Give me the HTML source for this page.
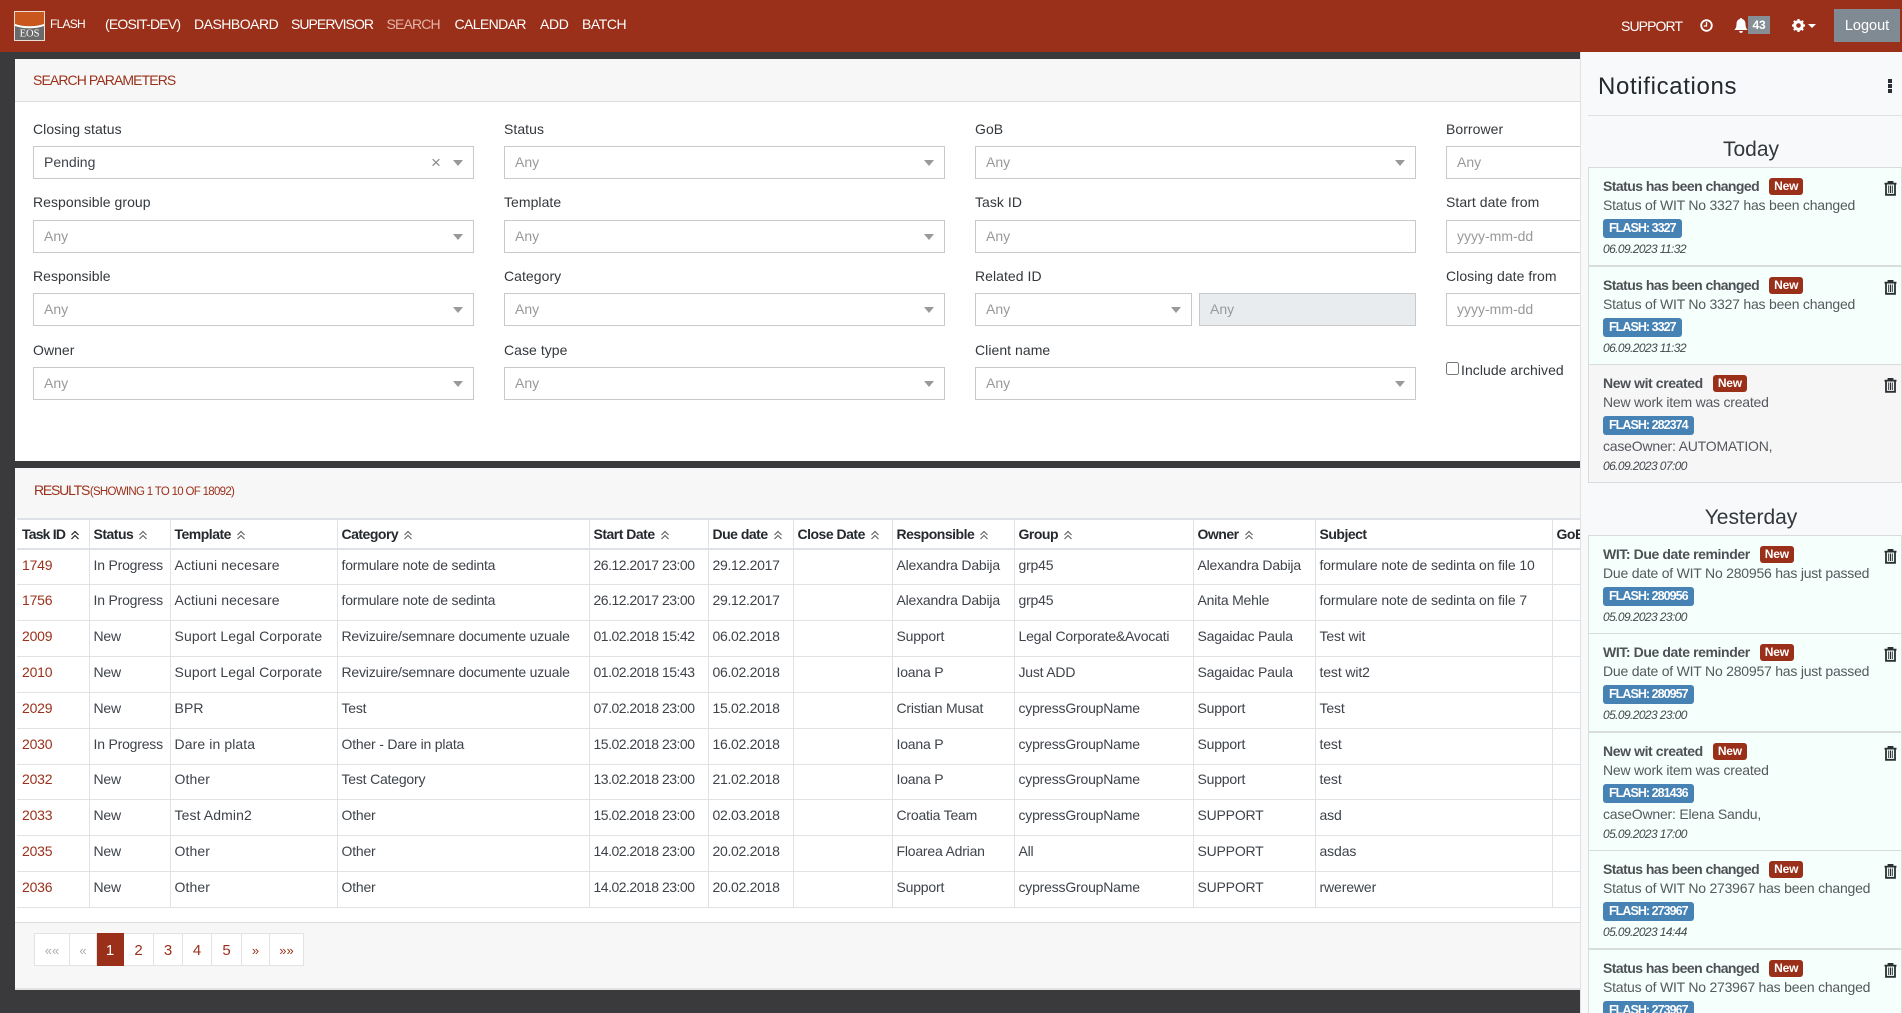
<!DOCTYPE html>
<html lang="en"><head><meta charset="utf-8"><title>FLASH - Search</title>
<style>
*{box-sizing:border-box}
html,body{margin:0;padding:0;width:1902px;height:1013px;overflow:hidden;background:#3a3a3c;font-family:"Liberation Sans",sans-serif;font-size:14px;color:#3a3f45}
#root{position:relative;width:1902px;height:1013px;overflow:hidden;background:#3a3a3c}
.a,.t{position:absolute}
.t{white-space:nowrap;line-height:20px;height:20px}
nav{position:absolute;left:0;top:0;width:1902px;height:52px;background:#9b301a}
nav .t{color:#fff;font-size:14px;letter-spacing:-.35px}
.panel{position:absolute;left:15px;width:1570px;background:#fff}
.hd{position:absolute;left:0;width:100%;background:#f7f7f7}
.lb{font-size:14px;color:#33383d;letter-spacing:.05px}
.sel{position:absolute;height:33px;border:1px solid #c9c9c9;background:#fff;color:#999;line-height:31px;padding-left:10px;font-size:14px}
.sel.ar:after{content:"";position:absolute;right:10px;top:13px;border-left:5px solid transparent;border-right:5px solid transparent;border-top:6px solid #999}
table{position:absolute;left:17px;top:518px;border-collapse:collapse;table-layout:fixed;width:1600px;background:#fff}
th,td{padding:0 0 0 4px;text-align:left;font-size:14px;white-space:nowrap;overflow:hidden;border-right:1px solid #dfe3e6;letter-spacing:-.2px}
th{height:30px;border-top:2px solid #dee2e6;border-bottom:2px solid #dee2e6;color:#25292d;font-weight:bold;letter-spacing:-.5px}
td{height:35.85px;padding-bottom:5px;border-bottom:1px solid #dfe3e6;color:#3e434a}
td:first-child,th:first-child{padding-left:5px}
td:first-child{color:#9b301a}
th:first-child{letter-spacing:-.8px}
td:nth-child(3){letter-spacing:.1px}
td:nth-child(5){letter-spacing:-.5px}
td:nth-child(6){letter-spacing:-.3px}
td:nth-child(11){letter-spacing:-.12px}
th svg{width:10px;height:10px;margin-left:5px;vertical-align:-1px}
.pg{position:absolute;top:933px;height:33px;border:1px solid #e3e3e3;border-left:0;background:#fff;color:#9b301a;text-align:center;line-height:33px;font-size:15px}
#nt{position:absolute;left:1580px;top:52px;width:322px;height:961px;background:#f8f9fb;border-left:1px solid #dfe2e6}
.c{position:absolute;left:1588px;width:314px;border:1px solid #d8dddc;background:#f5fffb}
.c.r{background:#f6f6f7}
.ti{position:absolute;left:14px;top:8px;line-height:20px;font-weight:bold;font-size:14px;color:#4d5156;letter-spacing:-.55px;white-space:nowrap}
.ti b{display:inline-block;margin-left:10px;background:#9b301a;color:#fff;font-size:12px;line-height:17px;height:17px;padding:0 5px;border-radius:3px;vertical-align:1px;letter-spacing:-.2px}
.w{letter-spacing:-.4px}
.de{position:absolute;left:14px;top:27px;line-height:20px;font-size:14px;color:#55595e;letter-spacing:-.22px;white-space:nowrap}
.fl{position:absolute;left:14px;top:51px;height:19px;line-height:19px;padding:0 6px;background:#4682b4;color:#fff;font-weight:bold;font-size:12.5px;border-radius:3px;letter-spacing:-.95px;white-space:nowrap}
.da{position:absolute;left:14px;top:71px;line-height:20px;font-size:12px;font-style:italic;color:#44484d;letter-spacing:-.6px;white-space:nowrap}
.co{position:absolute;left:14px;top:71px;line-height:20px;font-size:14px;color:#55595e;letter-spacing:-.2px;white-space:nowrap}
.tr{position:absolute;left:295px;top:13px;width:13px;height:15px}
</style></head><body>
<div id="root">
<svg width="0" height="0" style="position:absolute"><defs>
<symbol id="up" viewBox="0 0 10 10"><path d="M1.500 5 5 1.500 8.500 5M1.500 9 5 5.500 8.500 9" fill="none" stroke="currentColor" stroke-width="1.200"/></symbol>
<symbol id="bin" viewBox="0 0 13 15"><path d="M4.500 2V.8h4V2M.5 2.600h12M2 3v10.800h9V3" fill="none" stroke="#2b2f33" stroke-width="1.800"/><path d="M4.700 4.500v7.500M6.500 4.500v7.500M8.300 4.500v7.500" stroke="#2b2f33" stroke-width="1"/></symbol>
</defs></svg>

<div class="panel" style="top:59px;height:402px">
  <div class="hd" style="top:0;height:43px;border-bottom:1px solid #dcdcdc"></div>
</div>
<div class="t" style="left:33px;top:70px;color:#9b301a;font-size:14px;letter-spacing:-.9px">SEARCH PARAMETERS</div>

<div class="t lb" style="left:33px;top:119px">Closing status</div>
<div class="t lb" style="left:504px;top:119px">Status</div>
<div class="t lb" style="left:975px;top:119px">GoB</div>
<div class="t lb" style="left:1446px;top:119px">Borrower</div>
<div class="sel ar" style="left:33px;top:146px;width:441px;color:#3e434a">Pending<span class="a" style="left:397px;top:0;color:#888;font-size:17px">×</span></div>
<div class="sel ar" style="left:504px;top:146px;width:441px">Any</div>
<div class="sel ar" style="left:975px;top:146px;width:441px">Any</div>
<div class="sel" style="left:1446px;top:146px;width:200px">Any</div>

<div class="t lb" style="left:33px;top:192px">Responsible group</div>
<div class="t lb" style="left:504px;top:192px">Template</div>
<div class="t lb" style="left:975px;top:192px">Task ID</div>
<div class="t lb" style="left:1446px;top:192px">Start date from</div>
<div class="sel ar" style="left:33px;top:220px;width:441px">Any</div>
<div class="sel ar" style="left:504px;top:220px;width:441px">Any</div>
<div class="sel" style="left:975px;top:220px;width:441px">Any</div>
<div class="sel" style="left:1446px;top:220px;width:200px">yyyy-mm-dd</div>

<div class="t lb" style="left:33px;top:266px">Responsible</div>
<div class="t lb" style="left:504px;top:266px">Category</div>
<div class="t lb" style="left:975px;top:266px">Related ID</div>
<div class="t lb" style="left:1446px;top:266px">Closing date from</div>
<div class="sel ar" style="left:33px;top:293px;width:441px">Any</div>
<div class="sel ar" style="left:504px;top:293px;width:441px">Any</div>
<div class="sel ar" style="left:975px;top:293px;width:217px">Any</div>
<div class="sel" style="left:1199px;top:293px;width:217px;background:#e9ecef">Any</div>
<div class="sel" style="left:1446px;top:293px;width:200px">yyyy-mm-dd</div>

<div class="t lb" style="left:33px;top:340px">Owner</div>
<div class="t lb" style="left:504px;top:340px">Case type</div>
<div class="t lb" style="left:975px;top:340px">Client name</div>
<div class="sel ar" style="left:33px;top:367px;width:441px">Any</div>
<div class="sel ar" style="left:504px;top:367px;width:441px">Any</div>
<div class="sel ar" style="left:975px;top:367px;width:441px">Any</div>
<div class="a" style="left:1446px;top:362px;width:13px;height:13px;border:1px solid #767676;border-radius:2.500px;background:#fff"></div>
<div class="t lb" style="left:1461px;top:360px">Include archived</div>

<div class="panel" style="top:468px;height:522px;background:#f7f7f7;border-bottom:2px solid #e2e2e2">
  <div class="a" style="left:0;top:50px;width:100%;height:405px;background:#fff;border-bottom:1px solid #dcdcdc"></div>
</div>
<div class="t" style="left:34px;top:480px;color:#9b301a;font-size:14px;letter-spacing:-1.2px">RESULTS <span style="font-size:11.5px;letter-spacing:-.7px;margin-left:-2px">(SHOWING 1 TO 10 OF 18092)</span></div>

<table>
<colgroup><col style="width:72px"><col style="width:81px"><col style="width:167px"><col style="width:252px"><col style="width:119px"><col style="width:85px"><col style="width:99px"><col style="width:122px"><col style="width:179px"><col style="width:122px"><col style="width:237px"><col style="width:66px"></colgroup>
<tr><th>Task ID<svg style="color:#222"><use href="#up"/></svg></th><th>Status<svg style="color:#666"><use href="#up"/></svg></th><th>Template<svg style="color:#666"><use href="#up"/></svg></th><th>Category<svg style="color:#666"><use href="#up"/></svg></th><th>Start Date<svg style="color:#666"><use href="#up"/></svg></th><th>Due date<svg style="color:#666"><use href="#up"/></svg></th><th>Close Date<svg style="color:#666"><use href="#up"/></svg></th><th>Responsible<svg style="color:#666"><use href="#up"/></svg></th><th>Group<svg style="color:#666"><use href="#up"/></svg></th><th>Owner<svg style="color:#666"><use href="#up"/></svg></th><th>Subject</th><th>GoB</th></tr>
<tr><td>1749</td><td>In Progress</td><td>Actiuni necesare</td><td>formulare note de sedinta</td><td>26.12.2017 23:00</td><td>29.12.2017</td><td></td><td>Alexandra Dabija</td><td>grp45</td><td>Alexandra Dabija</td><td>formulare note de sedinta on file 10</td><td></td></tr>
<tr><td>1756</td><td>In Progress</td><td>Actiuni necesare</td><td>formulare note de sedinta</td><td>26.12.2017 23:00</td><td>29.12.2017</td><td></td><td>Alexandra Dabija</td><td>grp45</td><td>Anita Mehle</td><td>formulare note de sedinta on file 7</td><td></td></tr>
<tr><td>2009</td><td>New</td><td>Suport Legal Corporate</td><td>Revizuire/semnare documente uzuale</td><td>01.02.2018 15:42</td><td>06.02.2018</td><td></td><td>Support</td><td>Legal Corporate&amp;Avocati</td><td>Sagaidac Paula</td><td>Test wit</td><td></td></tr>
<tr><td>2010</td><td>New</td><td>Suport Legal Corporate</td><td>Revizuire/semnare documente uzuale</td><td>01.02.2018 15:43</td><td>06.02.2018</td><td></td><td>Ioana P</td><td>Just ADD</td><td>Sagaidac Paula</td><td>test wit2</td><td></td></tr>
<tr><td>2029</td><td>New</td><td>BPR</td><td>Test</td><td>07.02.2018 23:00</td><td>15.02.2018</td><td></td><td>Cristian Musat</td><td>cypressGroupName</td><td>Support</td><td>Test</td><td></td></tr>
<tr><td>2030</td><td>In Progress</td><td>Dare in plata</td><td>Other - Dare in plata</td><td>15.02.2018 23:00</td><td>16.02.2018</td><td></td><td>Ioana P</td><td>cypressGroupName</td><td>Support</td><td>test</td><td></td></tr>
<tr><td>2032</td><td>New</td><td>Other</td><td>Test Category</td><td>13.02.2018 23:00</td><td>21.02.2018</td><td></td><td>Ioana P</td><td>cypressGroupName</td><td>Support</td><td>test</td><td></td></tr>
<tr><td>2033</td><td>New</td><td>Test Admin2</td><td>Other</td><td>15.02.2018 23:00</td><td>02.03.2018</td><td></td><td>Croatia Team</td><td>cypressGroupName</td><td>SUPPORT</td><td>asd</td><td></td></tr>
<tr><td>2035</td><td>New</td><td>Other</td><td>Other</td><td>14.02.2018 23:00</td><td>20.02.2018</td><td></td><td>Floarea Adrian</td><td>All</td><td>SUPPORT</td><td>asdas</td><td></td></tr>
<tr><td>2036</td><td>New</td><td>Other</td><td>Other</td><td>14.02.2018 23:00</td><td>20.02.2018</td><td></td><td>Support</td><td>cypressGroupName</td><td>SUPPORT</td><td>rwerewer</td><td></td></tr>
</table>

<div class="pg" style="left:34px;width:36px;border-left:1px solid #e3e3e3;color:#aaa;font-size:13px">««</div>
<div class="pg" style="left:70px;width:27px;color:#aaa;font-size:13px">«</div>
<div class="pg" style="left:97px;width:27px;background:#9b301a;border-color:#9b301a;color:#fff">1</div>
<div class="pg" style="left:124px;width:30px">2</div>
<div class="pg" style="left:154px;width:29px">3</div>
<div class="pg" style="left:183px;width:29px">4</div>
<div class="pg" style="left:212px;width:30px">5</div>
<div class="pg" style="left:242px;width:28px;font-size:13px">»</div>
<div class="pg" style="left:270px;width:34px;font-size:13px">»»</div>

<nav>
  <svg class="a" style="left:14px;top:11px" width="31" height="30" viewBox="0 0 31 30"><rect width="31" height="30" fill="#e9dcd5"/><rect x="1" y="1" width="29" height="28" fill="#6a6a6a"/><path d="M1 1h29v12c-9 3-20 3-29 0z" fill="#c9561c"/><path d="M1 13c9 3 20 3 29 0v2c-9 3-20 3-29 0z" fill="#fff"/><text x="15.500" y="25.500" text-anchor="middle" font-family="Liberation Serif,serif" font-size="10.500" fill="#fff">EOS</text></svg>
  <div class="t" style="left:50px;top:14px;font-size:12px;letter-spacing:-.75px">FLASH</div>
  <div class="t" style="left:105px;top:14px;letter-spacing:-.8px">(EOSIT-DEV)</div>
  <div class="t" style="left:194px;top:14px;letter-spacing:-.5px">DASHBOARD</div>
  <div class="t" style="left:291px;top:14px;letter-spacing:-.95px">SUPERVISOR</div>
  <div class="t" style="left:386.500px;top:14px;color:#e3b5aa;letter-spacing:-.85px">SEARCH</div>
  <div class="t" style="left:454.500px;top:14px;letter-spacing:-.6px">CALENDAR</div>
  <div class="t" style="left:540px;top:14px">ADD</div>
  <div class="t" style="left:582px;top:14px;letter-spacing:-.45px">BATCH</div>
  <div class="t" style="left:1621px;top:16px;letter-spacing:-.9px">SUPPORT</div>
  <svg class="a" style="left:1700px;top:19px" width="13" height="13" viewBox="0 0 13 13"><circle cx="6.500" cy="6.500" r="5.300" fill="none" stroke="#fff" stroke-width="1.800"/><path d="M6.500 3v4H3.800" fill="none" stroke="#fff" stroke-width="1.300"/></svg>
  <svg class="a" style="left:1734px;top:18px" width="14" height="15" viewBox="0 0 14 15"><path d="M7 0c.8 0 1.200.5 1.200 1.100C10.500 1.700 11.500 3.600 11.500 6c0 3 .8 4.600 2.200 6H.3c1.400-1.400 2.200-3 2.200-6 0-2.400 1-4.300 3.300-4.900C5.800.5 6.200 0 7 0zM5.200 13h3.600c0 1.200-.8 2-1.800 2s-1.800-.8-1.800-2z" fill="#fff"/></svg>
  <div class="a" style="left:1748px;top:16px;width:22px;height:18px;background:#868e96;color:#fff;font-weight:bold;font-size:12px;line-height:18px;text-align:center;letter-spacing:-.2px">43</div>
  <svg class="a" style="left:1792px;top:19px" width="13" height="13" viewBox="0 0 13 13"><circle cx="6.500" cy="6.500" r="3.800" fill="none" stroke="#fff" stroke-width="3"/><path d="M6.500 0v13M0 6.500h13M1.900 1.900l9.200 9.200M11.100 1.900l-9.200 9.200" stroke="#fff" stroke-width="2.200" stroke-dasharray="2.400 8.200 2.400"/></svg>
  <div class="a" style="left:1808px;top:24px;border-left:4px solid transparent;border-right:4px solid transparent;border-top:4px solid #fff"></div>
  <div class="a" style="left:1834px;top:9px;width:66px;height:33px;background:#808a93;color:#fff;font-size:14.500px;line-height:35px;text-align:center">Logout</div>
</nav>

<div id="nt"></div>
<div class="t" style="left:1598px;top:72px;height:30px;line-height:30px;font-size:24px;color:#24282c;letter-spacing:.65px">Notifications</div>
<div class="a" style="left:1888px;top:79px;width:4px;height:3.500px;background:#2b2f33;box-shadow:0 5px 0 #2b2f33,0 10px 0 #2b2f33"></div>
<div class="a" style="left:1588px;top:115px;width:314px;height:1px;background:#dfe2e4"></div>
<div class="t" style="left:1594px;width:314px;top:137px;height:26px;line-height:26px;text-align:center;font-size:21px;color:#33373b">Today</div>

<div class="c" style="top:167px;height:99px"><div class="ti">Status has been changed<b>New</b></div><div class="de">Status of WIT No 3327 has been changed</div><div class="fl">FLASH: 3327</div><div class="da">06.09.2023 11:32</div><svg class="tr"><use href="#bin"/></svg></div>
<div class="c" style="top:266px;height:99px"><div class="ti">Status has been changed<b>New</b></div><div class="de">Status of WIT No 3327 has been changed</div><div class="fl">FLASH: 3327</div><div class="da">06.09.2023 11:32</div><svg class="tr"><use href="#bin"/></svg></div>
<div class="c r" style="top:364px;height:119px"><div class="ti w">New wit created<b>New</b></div><div class="de">New work item was created</div><div class="fl">FLASH: 282374</div><div class="co">caseOwner: AUTOMATION,</div><div class="da" style="top:91px">06.09.2023 07:00</div><svg class="tr"><use href="#bin"/></svg></div>

<div class="t" style="left:1594px;width:314px;top:505px;height:26px;line-height:26px;text-align:center;font-size:21px;color:#33373b">Yesterday</div>

<div class="c" style="top:535px;height:99px"><div class="ti w">WIT: Due date reminder<b>New</b></div><div class="de">Due date of WIT No 280956 has just passed</div><div class="fl">FLASH: 280956</div><div class="da">05.09.2023 23:00</div><svg class="tr"><use href="#bin"/></svg></div>
<div class="c" style="top:633px;height:99px"><div class="ti w">WIT: Due date reminder<b>New</b></div><div class="de">Due date of WIT No 280957 has just passed</div><div class="fl">FLASH: 280957</div><div class="da">05.09.2023 23:00</div><svg class="tr"><use href="#bin"/></svg></div>
<div class="c" style="top:732px;height:119px"><div class="ti w">New wit created<b>New</b></div><div class="de">New work item was created</div><div class="fl">FLASH: 281436</div><div class="co">caseOwner: Elena Sandu,</div><div class="da" style="top:91px">05.09.2023 17:00</div><svg class="tr"><use href="#bin"/></svg></div>
<div class="c" style="top:850px;height:99px"><div class="ti">Status has been changed<b>New</b></div><div class="de">Status of WIT No 273967 has been changed</div><div class="fl">FLASH: 273967</div><div class="da">05.09.2023 14:44</div><svg class="tr"><use href="#bin"/></svg></div>
<div class="c" style="top:949px;height:99px"><div class="ti">Status has been changed<b>New</b></div><div class="de">Status of WIT No 273967 has been changed</div><div class="fl">FLASH: 273967</div><div class="da">05.09.2023 14:44</div><svg class="tr"><use href="#bin"/></svg></div>
</div>
</body></html>
